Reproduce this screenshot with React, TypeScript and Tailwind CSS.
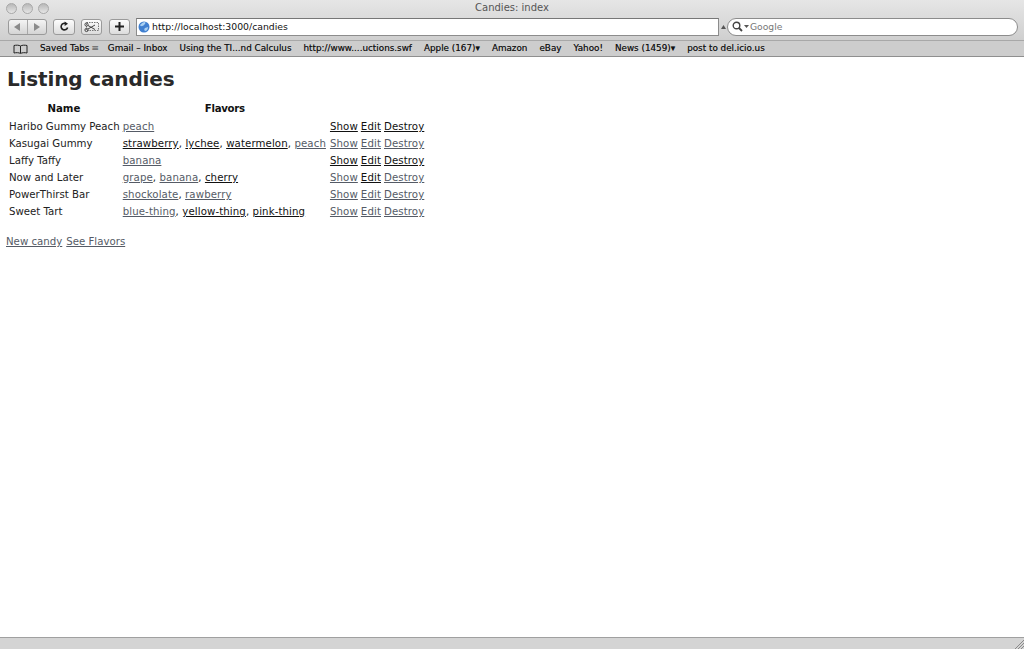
import React from 'react';

type FlavorLink = { label: string; dark?: boolean };

interface Candy {
  name: string;
  flavors: FlavorLink[];
  show?: boolean;
  edit?: boolean;
  destroy?: boolean;
}

const candies: Candy[] = [
  { name: 'Haribo Gummy Peach', flavors: [{ label: 'peach' }], show: true, edit: true, destroy: true },
  {
    name: 'Kasugai Gummy',
    flavors: [
      { label: 'strawberry', dark: true },
      { label: 'lychee', dark: true },
      { label: 'watermelon', dark: true },
      { label: 'peach' },
    ],
  },
  { name: 'Laffy Taffy', flavors: [{ label: 'banana' }], show: true, edit: true, destroy: true },
  {
    name: 'Now and Later',
    flavors: [{ label: 'grape' }, { label: 'banana' }, { label: 'cherry', dark: true }],
    edit: true,
  },
  { name: 'PowerThirst Bar', flavors: [{ label: 'shockolate' }, { label: 'rawberry' }] },
  {
    name: 'Sweet Tart',
    flavors: [{ label: 'blue-thing' }, { label: 'yellow-thing', dark: true }, { label: 'pink-thing', dark: true }],
  },
];

const bookmarks = [
  'Gmail – Inbox',
  'Using the TI...nd Calculus',
  'http://www....uctions.swf',
  'Apple (167)▾',
  'Amazon',
  'eBay',
  'Yahoo!',
  'News (1459)▾',
  'post to del.icio.us',
];

const CandyLink = ({ label, dark }: { label: string; dark?: boolean }) => (
  <a href="#" className={`underline ${dark ? 'text-[#111]' : 'text-[#555b66]'}`}>
    {label}
  </a>
);

const ToolButton = ({ children, className }: { children: React.ReactNode; className: string }) => (
  <div
    className={`flex h-[16px] items-center justify-center rounded-[3px] border border-[#9a9a9a] bg-gradient-to-b from-[#fdfdfd] to-[#dcdcdc] ${className}`}
  >
    {children}
  </div>
);

const Dot = () => <div className="h-[11px] w-[11px] rounded-full border border-[#a8a8a8] bg-gradient-to-b from-[#b8b8b8] to-[#e6e6e6]" />;

export default function App() {
  return (
    <div className="flex h-[649px] w-[1024px] flex-col overflow-hidden bg-white font-['DejaVu_Sans',sans-serif]">
      {/* window chrome */}
      <div className="h-[41px] border-b border-[#a8a8a8] bg-gradient-to-b from-[#e6e6e6] to-[#cfcfcf]">
        <div className="relative flex h-[16px] items-center gap-[5px] pl-[6px]">
          <Dot />
          <Dot />
          <Dot />
          <div className="absolute inset-x-0 top-[2px] text-center text-[10px] leading-[12px] text-[#555]">Candies: index</div>
        </div>
        <div className="flex h-[21px] items-center pl-[8px]">
          <div className="flex h-[16px] w-[39px] rounded-[3px] border border-[#9a9a9a] bg-gradient-to-b from-[#f4f4f4] to-[#d4d4d4]">
            <div className="flex w-1/2 items-center justify-center border-r border-[#a8a8a8]">
              <svg width="7" height="8" viewBox="0 0 7 8"><path d="M6 0v8L0 4z" fill="#8a8a8a" /></svg>
            </div>
            <div className="flex w-1/2 items-center justify-center">
              <svg width="7" height="8" viewBox="0 0 7 8"><path d="M1 0v8l6-4z" fill="#8a8a8a" /></svg>
            </div>
          </div>
          <ToolButton className="ml-[6px] w-[22px]">
            <svg width="11" height="11" viewBox="0 0 11 11" fill="none">
              <path d="M8.600 6.500A3.300 3.300 0 1 1 7 2.700" stroke="#222" strokeWidth="1.600" />
              <path d="M5.600 0.400 9 2.800 5.600 5z" fill="#222" />
            </svg>
          </ToolButton>
          <ToolButton className="ml-[6px] w-[21px]">
            <svg width="16" height="12" viewBox="0 0 16 12" fill="none">
              <rect x="2.500" y="1.500" width="12" height="8" stroke="#777" strokeDasharray="1.500 1" />
              <circle cx="2.500" cy="9" r="1.600" stroke="#444" />
              <circle cx="2.500" cy="3.500" r="1.600" stroke="#444" />
              <path d="M4 8 11 4M4 4.500l7 4" stroke="#444" />
            </svg>
          </ToolButton>
          <ToolButton className="ml-[7px] w-[21px]">
            <svg width="9" height="9" viewBox="0 0 9 9"><path d="M3.500 0h2v3.500h3.500v2h-3.500v3.500h-2v-3.500h-3.500v-2h3.500z" fill="#222" /></svg>
          </ToolButton>
          <div className="ml-[6px] flex h-[18px] w-[583px] items-center border border-[#8c8c8c] border-t-[#777] bg-white pl-[1px]">
            <svg width="12" height="12" viewBox="0 0 12 12">
              <circle cx="6" cy="6" r="5.500" fill="#3f7fd0" />
              <path d="M2 4c2-2 3-3 5-3 1 1 0 2-1 3S3 6 2 4zM7 7l3-1c0 2-1 4-3 4-1-1-1-2 0-3z" fill="#a9d0f2" />
            </svg>
            <span className="ml-[2px] text-[9.300px] leading-[12px] text-[#111]">http://localhost:3000/candies</span>
          </div>
          <svg className="ml-[2px]" width="5" height="4" viewBox="0 0 5 4"><path d="M2.500 0 5 4H0z" fill="#555" /></svg>
          <div className="ml-[1px] flex h-[18px] w-[291px] items-center rounded-full border border-[#8c8c8c] bg-white pl-[4px]">
            <svg width="11" height="11" viewBox="0 0 11 11" fill="none">
              <circle cx="4.500" cy="4.500" r="3.300" stroke="#444" strokeWidth="1.400" />
              <path d="M7 7l3 3" stroke="#444" strokeWidth="1.800" />
            </svg>
            <svg className="ml-[1px]" width="5" height="3" viewBox="0 0 5 3"><path d="M0 0h5L2.500 3z" fill="#555" /></svg>
            <span className="ml-[1px] text-[9.200px] leading-[12px] text-[#777]">Google</span>
          </div>
        </div>
      </div>

      {/* bookmarks bar */}
      <div className="flex h-[16px] items-center border-b border-[#8f8f8f] bg-[#cdcdcd] pt-[1px] pl-[13px] text-[8.800px] text-[#111] [text-shadow:0_0_0.5px_#666]">
        <svg width="15" height="10" viewBox="0 0 15 10" fill="none">
          <path d="M7.500 2C6 1 3 1 1 1.500V9c2-.5 5-.5 6.500.5C9 8.500 12 8.500 14 9V1.500C12 1 9 1 7.500 2zM7.500 2v7" stroke="#222" />
        </svg>
        <span className="ml-[12px]">Saved Tabs</span>
        <span className="ml-[2px] text-[#777]">≡</span>
        <div className="ml-[9px] flex gap-[12px]">
          {bookmarks.map((item) => (
            <span key={item}>{item}</span>
          ))}
        </div>
      </div>

      {/* page */}
      <div className="flex-1 pl-[6px] text-[10.200px] text-[#222]">
        <h1 className="mt-[9px] ml-[1px] text-[20px] leading-[26px] font-bold tracking-[-0.150px] text-[#2a2a2a]">Listing candies</h1>
        <table className="mt-[8px] border-separate border-spacing-x-[3px] border-spacing-y-0 -ml-[1px]">
          <thead>
            <tr className="h-[18px]">
              <th className="p-0 text-center font-bold text-[#111]">Name</th>
              <th className="p-0 text-center font-bold tracking-[-0.300px] text-[#111]">Flavors</th>
            </tr>
          </thead>
          <tbody className="tracking-[0.100px]">
            {candies.map((candy) => (
              <tr key={candy.name} className="h-[17px]">
                <td className="py-0 pl-[1px] pr-0 tracking-normal">{candy.name}</td>
                <td className="py-0 pl-0 pr-[1px]">
                  {candy.flavors.map((flavor, i) => (
                    <React.Fragment key={flavor.label}>
                      {i > 0 && ', '}
                      <CandyLink label={flavor.label} dark={flavor.dark} />
                    </React.Fragment>
                  ))}
                </td>
                <td className="p-0"><CandyLink label="Show" dark={candy.show} /></td>
                <td className="p-0"><CandyLink label="Edit" dark={candy.edit} /></td>
                <td className="p-0"><CandyLink label="Destroy" dark={candy.destroy} /></td>
              </tr>
            ))}
          </tbody>
        </table>
        <div className="mt-[14px] flex gap-[4px]">
          <CandyLink label="New candy" />
          <CandyLink label="See Flavors" />
        </div>
      </div>

      {/* status bar */}
      <div className="relative h-[12px] border-t border-[#a0a0a0] bg-[#d4d4d4]">
        <svg className="absolute right-0 bottom-0" width="10" height="10" viewBox="0 0 10 10" fill="none">
          <path d="M1 10 10 1M4 10l6-6M7 10l3-3" stroke="#8a8a8a" />
        </svg>
      </div>
    </div>
  );
}
